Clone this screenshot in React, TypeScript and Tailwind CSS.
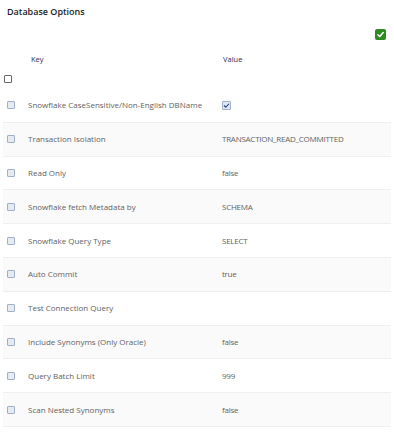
const rows: { key: string; value: string; checked?: boolean }[] = [
  { key: 'Snowflake CaseSensitive/Non-English DBName', value: '', checked: true },
  { key: 'Transaction Isolation', value: 'TRANSACTION_READ_COMMITTED' },
  { key: 'Read Only', value: 'false' },
  { key: 'Snowflake fetch Metadata by', value: 'SCHEMA' },
  { key: 'Snowflake Query Type', value: 'SELECT' },
  { key: 'Auto Commit', value: 'true' },
  { key: 'Test Connection Query', value: '' },
  { key: 'Include Synonyms (Only Oracle)', value: 'false' },
  { key: 'Query Batch Limit', value: '999' },
  { key: 'Scan Nested Synonyms', value: 'false' },
]

function RowBox() {
  return <span className="block w-[8px] h-[8px] border border-[#9fb0c8] bg-[#e6ebf2] rounded-[1px]" />
}

export default function App() {
  return (
    <div className="w-[394px] h-[434px] bg-white overflow-hidden font-['Open_Sans',sans-serif]">
      <div className="px-[7px] pt-[5px] text-[9px] font-semibold text-[#1c1c1c] leading-[14px]">
        Database Options
      </div>

      <div className="flex justify-end pr-[8px] pt-[10px]">
        <span className="flex items-center justify-center w-[11px] h-[11px] rounded-[2px] bg-[#2e8b1f]">
          <svg viewBox="0 0 12 12" className="w-[9px] h-[9px]">
            <path d="M2.5 6.3 L5 8.6 L9.6 3.4" fill="none" stroke="white" strokeWidth="2" strokeLinecap="round" strokeLinejoin="round" />
          </svg>
        </span>
      </div>

      <div className="grid grid-cols-[25px_197px_1fr] mt-[13px] text-[7.5px] font-medium text-[#2b2e5c] leading-[12px]">
        <div />
        <div className="pl-[6px]">Key</div>
        <div className="pl-[1px]">Value</div>
      </div>

      <div className="pl-[4px] pt-[10px] pb-[6px]">
        <span className="block w-[8px] h-[8px] border border-[#666] rounded-[1px] bg-white" />
      </div>

      <div className="mx-[3px]">
        {rows.map((r, i) => (
          <div
            key={r.key}
            className={
              'grid grid-cols-[22px_197px_1fr] items-center h-[33.8px] border-b border-[#efefef] text-[8px] leading-[12px] text-[#626262] ' +
              (i % 2 === 1 ? 'bg-[#fafafa]' : 'bg-white')
            }
          >
            <div className="pl-[4px]">
              <RowBox />
            </div>
            <div className="pl-[3px] whitespace-nowrap">{r.key}</div>
            <div className="whitespace-nowrap tracking-[-0.25px]">
              {r.checked ? (
                <span className="flex items-center justify-center w-[9px] h-[9px] border border-[#9fb0c8] bg-[#dfe7f2] rounded-[1px]">
                  <svg viewBox="0 0 10 10" className="w-[7px] h-[7px]">
                    <path d="M1.5 5 L4 7.5 L8.5 2.5" fill="none" stroke="#1f3f8a" strokeWidth="1.6" />
                  </svg>
                </span>
              ) : (
                r.value
              )}
            </div>
          </div>
        ))}
      </div>
    </div>
  )
}
